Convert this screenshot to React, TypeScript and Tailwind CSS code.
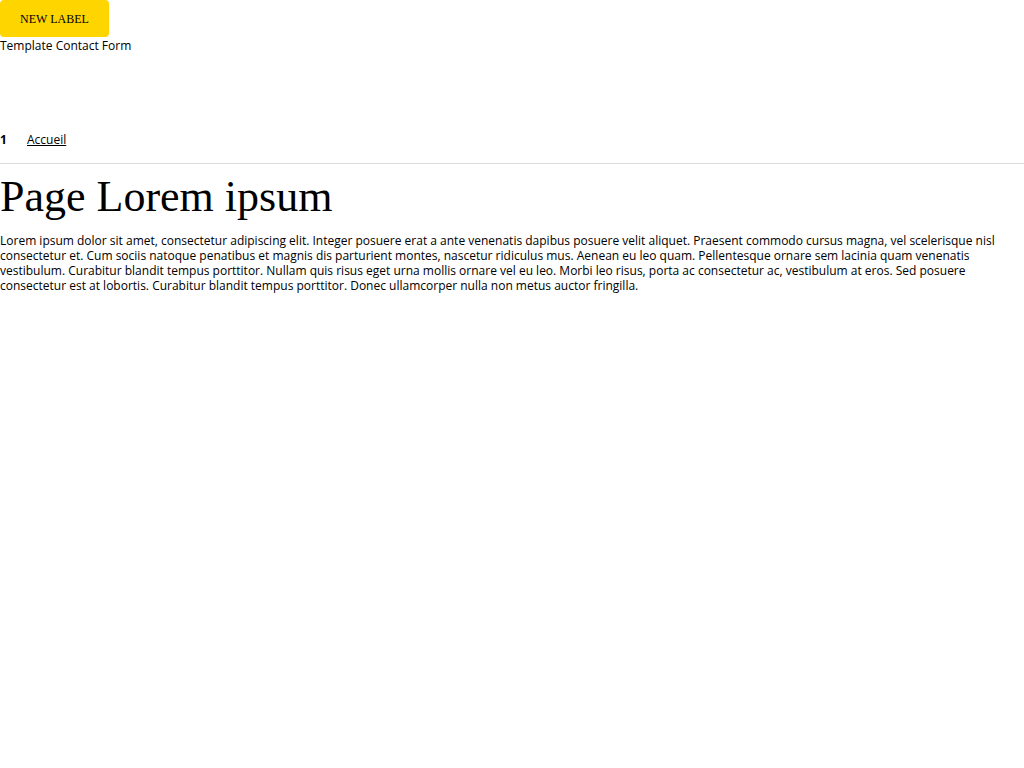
import React from "react";

export default function App() {
  const body =
    "Lorem ipsum dolor sit amet, consectetur adipiscing elit. Integer posuere erat a ante venenatis dapibus posuere velit aliquet. Praesent commodo cursus magna, vel scelerisque nisl consectetur et. Cum sociis natoque penatibus et magnis dis parturient montes, nascetur ridiculus mus. Aenean eu leo quam. Pellentesque ornare sem lacinia quam venenatis vestibulum. Curabitur blandit tempus porttitor. Nullam quis risus eget urna mollis ornare vel eu leo. Morbi leo risus, porta ac consectetur ac, vestibulum at eros. Sed posuere consectetur est at lobortis. Curabitur blandit tempus porttitor. Donec ullamcorper nulla non metus auctor fringilla.";
  return (
    <div className="min-h-[768px] bg-white text-black font-['Open_Sans',sans-serif] text-[12px] leading-[15px]">
      <button className="flex h-[37px] w-[109px] items-center justify-center rounded-[4px] bg-[#ffd500] pt-[2px] font-['Liberation_Serif',serif] text-[12px] text-black">
        NEW LABEL
      </button>
      <div className="mt-[1px]">Template Contact Form</div>
      <nav className="mt-[78px] flex h-[16px] items-center">
        <span className="w-[27px] font-bold">1</span>
        <a href="#" className="underline">Accueil</a>
      </nav>
      <hr className="mt-[16px] border-t border-[#dcdcdc]" />
      <h1 className="mt-[8px] font-['Liberation_Serif',serif] text-[44px] leading-[50px]">
        Page Lorem ipsum
      </h1>
      <p className="mt-[11px]">{body}</p>
    </div>
  );
}
